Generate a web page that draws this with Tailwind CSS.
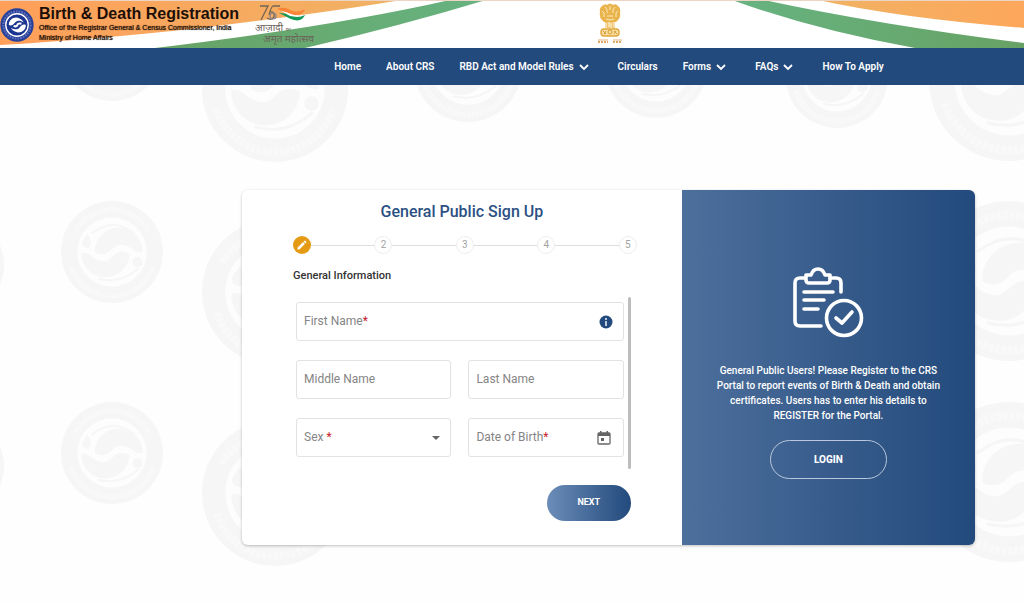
<!DOCTYPE html>
<html lang="en">
<head>
  <meta charset="UTF-8"/>
  <meta name="viewport" content="width=device-width, initial-scale=1.0"/>
  <title>General Public Sign Up</title>
  <script src="https://cdn.jsdelivr.net/npm/@tailwindcss/browser@4"></script>
</head>
<body class="relative min-h-screen overflow-x-hidden bg-[#fefefe] font-['Roboto','Noto_Sans',sans-serif] text-[#333]">

  <!-- watermark seals -->
  <svg class="absolute inset-0 -z-10 h-full w-full" aria-hidden="true">
    <defs>
      <symbol id="seal" viewBox="0 0 100 100">
        <circle cx="50" cy="50" r="50" fill="#f6f6f6"/>
        <circle cx="50" cy="50" r="34" fill="#fdfdfd"/>
        <path d="M33 49 A19 19 0 0 1 80 50 C72 52 70 44 60 43 C50 42 49 52 41 52 C36 52 34 51 33 49Z" fill="#f6f6f6"/>
        <path d="M67 52 A19 19 0 0 1 20 51 C28 49 30 57 40 59 C49 60 51 50 59 50 C64 50 66 51 67 52Z" fill="#f6f6f6"/>
        <path d="M26 32 Q32 41 27 46 Q19 46 21 39Z" fill="#f6f6f6"/>
        <circle cx="75" cy="60" r="5" fill="#f6f6f6"/>
        <path d="M30 32 Q52 15 72 32 M36 76 Q58 82 76 66" fill="none" stroke="#f6f6f6" stroke-width="2"/>
        <path d="M14 30 A41 41 0 0 1 86 30 M10 64 A42 42 0 0 0 90 64" fill="none" stroke="#f9f9f9" stroke-width="5" stroke-dasharray="3 1"/>
      </symbol>
    </defs>
    <use href="#seal" x="61" y="-1" width="102" height="102"/>
    <use href="#seal" x="61" y="201" width="102" height="102"/>
    <use href="#seal" x="61" y="402" width="102" height="102"/>
    <use href="#seal" x="-98" y="214" width="102" height="102"/>
    <use href="#seal" x="-98" y="415" width="102" height="102"/>
    <use href="#seal" x="202" y="16" width="146" height="146"/>
    <use href="#seal" x="202" y="219" width="146" height="146"/>
    <use href="#seal" x="202" y="420" width="146" height="146"/>
    <use href="#seal" x="414" y="14" width="108" height="108"/>
    <use href="#seal" x="605" y="16" width="102" height="102"/>
    <use href="#seal" x="786" y="26" width="102" height="102"/>
    <use href="#seal" x="929" y="1" width="160" height="160"/>
    <use href="#seal" x="929" y="201" width="160" height="160"/>
    <use href="#seal" x="929" y="402" width="160" height="160"/>
  </svg>

  <header class="relative flex h-12 items-start overflow-hidden bg-white">
    <!-- tricolour bands -->
    <svg class="absolute inset-0 h-full w-full" viewBox="0 0 1024 48" preserveAspectRatio="none" aria-hidden="true">
      <defs>
        <linearGradient id="saffron"><stop stop-color="#ff9f5a"/><stop offset="1" stop-color="#f0b264"/></linearGradient>
        <linearGradient id="saffronRight"><stop stop-color="#f0b264"/><stop offset="1" stop-color="#fda75b"/></linearGradient>
        <linearGradient id="green"><stop stop-color="#67a264"/><stop offset="1" stop-color="#67b381"/></linearGradient>
        <linearGradient id="greenRight"><stop stop-color="#67b381"/><stop offset="1" stop-color="#67a264"/></linearGradient>
      </defs>
      <path d="M0 0H402Q310 15 200 28Q90 40 0 45Z" fill="url(#saffron)"/>
      <path d="M155 48Q330 27 450 0H486Q400 26 305 48Z" fill="url(#green)"/>
      <path d="M732 0H764Q880 25 1024 43V48H915Q815 30 732 0Z" fill="url(#greenRight)"/>
      <path d="M818 0H1024V28Q900 18 818 0Z" fill="url(#saffronRight)"/>
      <path d="M0 0H1024V1H0Z" fill="#ecd5c5"/>
    </svg>

    <svg class="relative mt-2 h-[34px] w-[34px] shrink-0" viewBox="0 0 100 100" role="img" aria-label="Registrar General seal">
      <circle cx="50" cy="50" r="49" fill="#27409a"/>
      <circle cx="50" cy="50" r="40" fill="none" stroke="#5f70b8" stroke-width="6" stroke-dasharray="5 3"/>
      <circle cx="50" cy="50" r="33" fill="#1c3590" stroke="#fff" stroke-width="4"/>
      <path d="M26 50C26 32 44 24 56 30C64 33 68 38 70 43C60 35 50 36 45 42C39 49 34 54 26 50Z" fill="#fff"/>
      <path d="M76 50C76 68 58 76 46 70C38 67 34 62 32 57C42 65 52 64 57 58C62 51 68 46 76 50Z" fill="#fff"/>
      <path d="M40 53Q50 56 51 50T63 46" fill="none" stroke="#fff" stroke-width="6"/>
    </svg>

    <div class="relative ml-[5px] pt-[5px] font-['Liberation_Sans',Arial,sans-serif] whitespace-nowrap text-[#1c0f08]">
      <p class="text-base leading-[18px] font-bold">Birth &amp; Death Registration</p>
      <p class="text-[7px] leading-[10px] [text-shadow:0_0_1px_#1c0f08]">Office of the Registrar General &amp; Census Commissioner, India</p>
      <p class="text-[7px] leading-[10px] [text-shadow:0_0_1px_#1c0f08]">Ministry of Home Affairs</p>
    </div>

    <div class="relative ml-4 w-[62px] pt-1 text-[#6b6157]">
      <svg class="ml-[4px] h-[20px] w-[48px]" viewBox="0 0 48 20" role="img" aria-label="75">
        <path d="M1 2H9L2 16M10 11Q12 3 14 2H21M11 8Q16 7 15 13Q12 17 8 14" fill="none" stroke="#736453" stroke-width="1.3"/>
        <circle cx="14" cy="12" r="3" fill="none" stroke="#8a8596" stroke-width="1.2"/>
        <path d="M18 5Q25 2 31 6Q38 10 46 5Q44 11 36 11Q30 11 26 8Q22 6 18 5Z" fill="#fb8437"/>
        <path d="M20 9Q27 9 31 11Q38 15 46 11Q43 18 35 16Q31 15 28 13Q24 11 20 9Z" fill="#13995a"/>
        <path d="M22 7Q28 8 32 10Q37 12 41 11Q36 13 31 12Q26 9 22 7Z" fill="#fff"/>
      </svg>
      <p class="-mt-px text-[10px] leading-[10px] whitespace-nowrap" lang="hi">आज़ादी <span class="text-[5px]">का</span></p>
      <p class="pl-2 text-[10px] leading-[9px] whitespace-nowrap" lang="hi">अमृत महोत्सव</p>
    </div>

    <!-- national emblem -->
    <svg class="absolute top-[3px] left-[596px] h-[42px] w-[28px]" viewBox="0 0 28 42" role="img" aria-label="National emblem of India">
      <path d="M6 3Q9 0 11 2Q14 -1 17 2Q20 0 22 3Q25 5 24 9Q25 14 22 17L20 19H8L6 17Q3 14 4 9Q3 5 6 3Z" fill="#e9b44c"/>
      <path d="M9 4Q12 6 11 10M19 4Q16 6 17 10M6 8Q9 9 8 14M22 8Q19 9 20 14M14 3V7M11 13H17M10 16Q14 18 18 16" fill="none" stroke="#fbe9bd" stroke-width="1"/>
      <path d="M9 19H19V25H9Z" fill="#efc774"/>
      <path d="M10 20V25M13 19V24M15 20V25M18 19V24" stroke="#fff6df" stroke-width="1"/>
      <rect x="5" y="26" width="18" height="7" rx="3" fill="#f7dda2" stroke="#e2a63b" stroke-width="1.4"/>
      <circle cx="14" cy="29" r="2" fill="none" stroke="#d99b30"/>
      <path d="M7 28L10 31M8 31L10 28M18 28L21 31M18 31L20 28" stroke="#d99b30"/>
      <path d="M2 37H12M17 37H26" stroke="#e0b380" stroke-width="1"/>
      <path d="M2 39H12M17 39H26" stroke="#e3a765" stroke-width="2" stroke-dasharray="2 1"/>
    </svg>
  </header>

  <nav class="flex h-[37px] items-center justify-center gap-[25px] bg-[#224a7c] pl-[194px] text-[10px] font-semibold whitespace-nowrap text-white">
    <a href="#">Home</a>
    <a href="#">About CRS</a>
    <a href="#" class="flex items-center gap-[5px]">RBD Act and Model Rules
      <svg class="mr-1 h-[10px] w-[10px]" viewBox="0 0 10 10" fill="none" stroke="currentColor" stroke-width="1.8"><path d="M1 3L5 7L9 3"/></svg>
    </a>
    <a href="#">Circulars</a>
    <a href="#" class="flex items-center gap-[5px]">Forms
      <svg class="mr-1 h-[10px] w-[10px]" viewBox="0 0 10 10" fill="none" stroke="currentColor" stroke-width="1.8"><path d="M1 3L5 7L9 3"/></svg>
    </a>
    <a href="#" class="flex items-center gap-[5px]">FAQs
      <svg class="mr-1 h-[10px] w-[10px]" viewBox="0 0 10 10" fill="none" stroke="currentColor" stroke-width="1.8"><path d="M1 3L5 7L9 3"/></svg>
    </a>
    <a href="#">How To Apply</a>
  </nav>

  <main class="mt-[105px] mr-[49px] mb-12 ml-[242px] grid grid-cols-[3fr_2fr] overflow-hidden rounded-md bg-white shadow-[0_1px_3px_rgba(0,0,0,0.25)]">
    <form class="px-[51px] pt-[11px] pb-6">
      <h1 class="text-center text-base leading-[22px] font-medium text-[#2c5083]">General Public Sign Up</h1>

      <ol class="mt-[13px] -mr-1.5 flex items-center text-[10px] leading-none text-[#a3a3a3]">
        <li class="flex h-[18px] w-[18px] items-center justify-center rounded-full bg-[#e59a14]" aria-label="Step 1">
          <svg class="h-[12px] w-[12px]" viewBox="0 0 24 24" fill="#fff"><path d="M3 17.25V21h3.75L17.8 9.94l-3.75-3.75L3 17.25zM20.7 7.04a1 1 0 0 0 0-1.41l-2.34-2.34a1 1 0 0 0-1.41 0l-1.83 1.83 3.75 3.75 1.83-1.83z"/></svg>
        </li>
        <li class="h-px flex-1 bg-[#dedede]" aria-hidden="true"></li>
        <li class="flex h-[18px] w-[18px] items-center justify-center rounded-full border border-[#eee]">2</li>
        <li class="h-px flex-1 bg-[#dedede]" aria-hidden="true"></li>
        <li class="flex h-[18px] w-[18px] items-center justify-center rounded-full border border-[#eee]">3</li>
        <li class="h-px flex-1 bg-[#dedede]" aria-hidden="true"></li>
        <li class="flex h-[18px] w-[18px] items-center justify-center rounded-full border border-[#eee]">4</li>
        <li class="h-px flex-1 bg-[#dedede]" aria-hidden="true"></li>
        <li class="flex h-[18px] w-[18px] items-center justify-center rounded-full border border-[#eee]">5</li>
      </ol>

      <h2 class="mt-3.5 text-[11px] leading-4 font-medium">General Information</h2>

      <div class="mt-[13px] flex gap-1 pl-[3px]">
        <div class="grid flex-1 grid-cols-2 gap-x-[17px] gap-y-[19px] pt-[5px] pb-3 text-xs text-[#858585]">
          <div class="col-span-2 flex h-[39px] items-center rounded-[3px] border border-[#e2e2e2] px-[7px]">
            <label for="firstName" class="pb-0.5">First Name<span class="text-[#c8202f]">*</span></label>
            <input id="firstName" type="text" required class="min-w-0 flex-1 px-1 outline-none">
            <button type="button" aria-label="First name help" class="mr-[3px]">
              <svg class="h-[14px] w-[14px]" viewBox="0 0 14 14"><circle cx="7" cy="7" r="6.5" fill="#224a7c"/><path d="M7 6V11M7 3V5" stroke="#fff" stroke-width="1.4"/></svg>
            </button>
          </div>
          <div class="flex h-[39px] items-center rounded-[3px] border border-[#e2e2e2] px-[7px]">
            <label for="middleName" class="pb-0.5">Middle Name</label>
            <input id="middleName" type="text" class="min-w-0 flex-1 px-1 outline-none">
          </div>
          <div class="flex h-[39px] items-center rounded-[3px] border border-[#e2e2e2] px-[7px]">
            <label for="lastName" class="pb-0.5">Last Name</label>
            <input id="lastName" type="text" class="min-w-0 flex-1 px-1 outline-none">
          </div>
          <div class="flex h-[39px] items-center rounded-[3px] border border-[#e2e2e2] px-[7px]">
            <label for="sex" class="pb-0.5">Sex <span class="text-[#c8202f]">*</span></label>
            <select id="sex" required class="min-w-0 flex-1 appearance-none px-1 outline-none">
              <option value=""></option>
              <option>Male</option>
              <option>Female</option>
              <option>Transgender</option>
            </select>
            <svg class="mr-[3px] h-[4px] w-[8px]" viewBox="0 0 8 4"><path d="M0 0H8L4 4Z" fill="#666"/></svg>
          </div>
          <div class="flex h-[39px] items-center rounded-[3px] border border-[#e2e2e2] px-[7px]">
            <label for="dob" class="pb-0.5">Date of Birth<span class="text-[#c8202f]">*</span></label>
            <input id="dob" type="text" required class="min-w-0 flex-1 px-1 outline-none">
            <button type="button" aria-label="Open calendar" class="mr-[5px]">
              <svg class="h-[14px] w-[14px]" viewBox="0 0 14 14"><path d="M2 2H12Q13 2 13 3V12Q13 13 12 13H2Q1 13 1 12V3Q1 2 2 2Z" fill="none" stroke="#666" stroke-width="1.3"/><path d="M1 2H13V5H1ZM3 0H4.500V2H3ZM9.500 0H11V2H9.500ZM4 7H7V10H4Z" fill="#666"/></svg>
            </button>
          </div>
        </div>
        <div class="w-[3px] rounded-full bg-[#bcbebe]"></div>
      </div>

      <div class="mt-4 flex justify-end">
        <button type="button" class="h-9 w-[84px] rounded-full bg-linear-to-r from-[#6c8db8] to-[#224a7c] text-[9px] font-bold text-white">NEXT</button>
      </div>
    </form>

    <section class="flex flex-col items-center bg-linear-to-r from-[#4d6f9c] to-[#224a7c] px-7 pt-[77px] text-center text-white">
      <svg class="h-[72px] w-[72px]" viewBox="0 0 72 72" fill="none" stroke="#fff" stroke-width="3.600" stroke-linecap="round" stroke-linejoin="round" aria-hidden="true">
        <path d="M13 11H8Q3 11 3 16V54Q3 59 8 59H29"/>
        <path d="M38 11H44Q49 11 49 16V25"/>
        <path d="M14 8H19Q21 2 26 2Q31 2 33 8H38V13Q38 16 35 16H17Q14 16 14 13Z"/>
        <path d="M12 25H41M12 33H32M12 42H26"/>
        <circle cx="52" cy="51" r="17.500"/>
        <path d="M44 51L50 56L60 45"/>
      </svg>
      <p class="mt-6 text-[10px] leading-[15px] font-medium">General Public Users! Please Register to the CRS Portal to report events of Birth &amp; Death and obtain certificates. Users has to enter his details to REGISTER for the Portal.</p>
      <a href="#" class="mt-[17px] flex h-[39px] w-[117px] items-center justify-center rounded-full border border-[#b9c8dc] text-[10px] font-extrabold">LOGIN</a>
    </section>
  </main>
</body>
</html>
